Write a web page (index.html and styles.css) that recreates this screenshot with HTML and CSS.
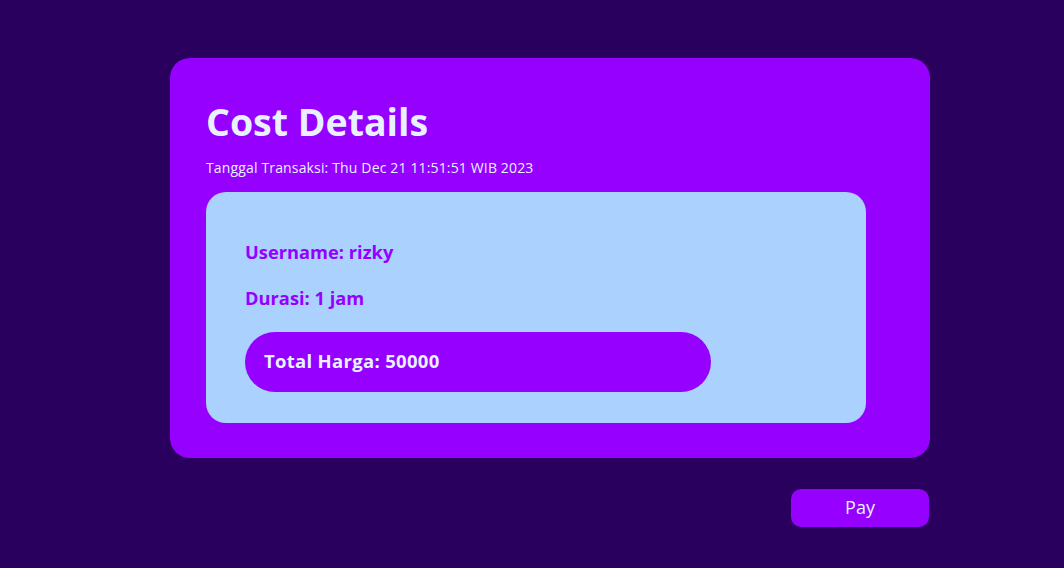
FILE: index.html
```html
<!DOCTYPE html>
<html>
<head>
<meta charset="utf-8">
<link rel="stylesheet" href="styles.css">
</head>
<body>
<main class="page">
  <section class="card">
    <h1 class="title">Cost Details</h1>
    <p class="date">Tanggal Transaksi: Thu Dec 21 11:51:51 WIB 2023</p>
    <div class="details">
      <p class="row">Username: rizky</p>
      <p class="row">Durasi: 1 jam</p>
      <div class="total">Total Harga: 50000</div>
    </div>
  </section>
  <div class="actions">
    <button class="pay">Pay</button>
  </div>
</main>
</body>
</html>
```
FILE: styles.css
```css
html, body {
  margin: 0;
  padding: 0;
  background: #2a005e;
  height: 100%;
  overflow: hidden;
}
body {
  font-family: "Open Sans", "Noto Sans", sans-serif;
}
.page {
  width: 760px;
  margin-left: 170px;
  padding-top: 58px;
  display: flex;
  flex-direction: column;
}
.card {
  background: #9500ff;
  border-radius: 20px;
  height: 400px;
  box-sizing: border-box;
  padding: 36px 64px 0 36px;
  display: flex;
  flex-direction: column;
}
.title {
  margin: 0;
  color: #e8f2ff;
  font-size: 37.5px;
  font-weight: 700;
  line-height: 56px;
  letter-spacing: 0;
}
.date {
  margin: 8px 0 0;
  color: #e8f2ff;
  font-size: 14px;
  letter-spacing: 0.15px;
  line-height: 20px;
}
.details {
  margin-top: 14px;
  background: #abd1ff;
  border-radius: 20px;
  height: 231px;
  box-sizing: border-box;
  padding: 47px 0 0 39px;
  display: flex;
  flex-direction: column;
  align-items: flex-start;
}
.row {
  margin: 0 0 20px;
  color: #9500ff;
  font-size: 18.3px;
  font-weight: 700;
  line-height: 26px;
}
.total {
  margin-top: 1px;
  width: 466px;
  height: 60px;
  box-sizing: border-box;
  background: #9500ff;
  border-radius: 30px;
  padding-left: 19px;
  padding-bottom: 3px;
  display: flex;
  align-items: center;
  color: #e8f2ff;
  font-size: 18.5px;
  letter-spacing: 0.3px;
  font-weight: 700;
}
.actions {
  display: flex;
  justify-content: flex-end;
  padding-top: 31px;
  padding-right: 1px;
}
.pay {
  width: 138px;
  height: 38px;
  border: none;
  border-radius: 10px;
  background: #9500ff;
  color: #e8f2ff;
  font-family: inherit;
  font-size: 18px;
  padding: 0 0 2px;
}
```
